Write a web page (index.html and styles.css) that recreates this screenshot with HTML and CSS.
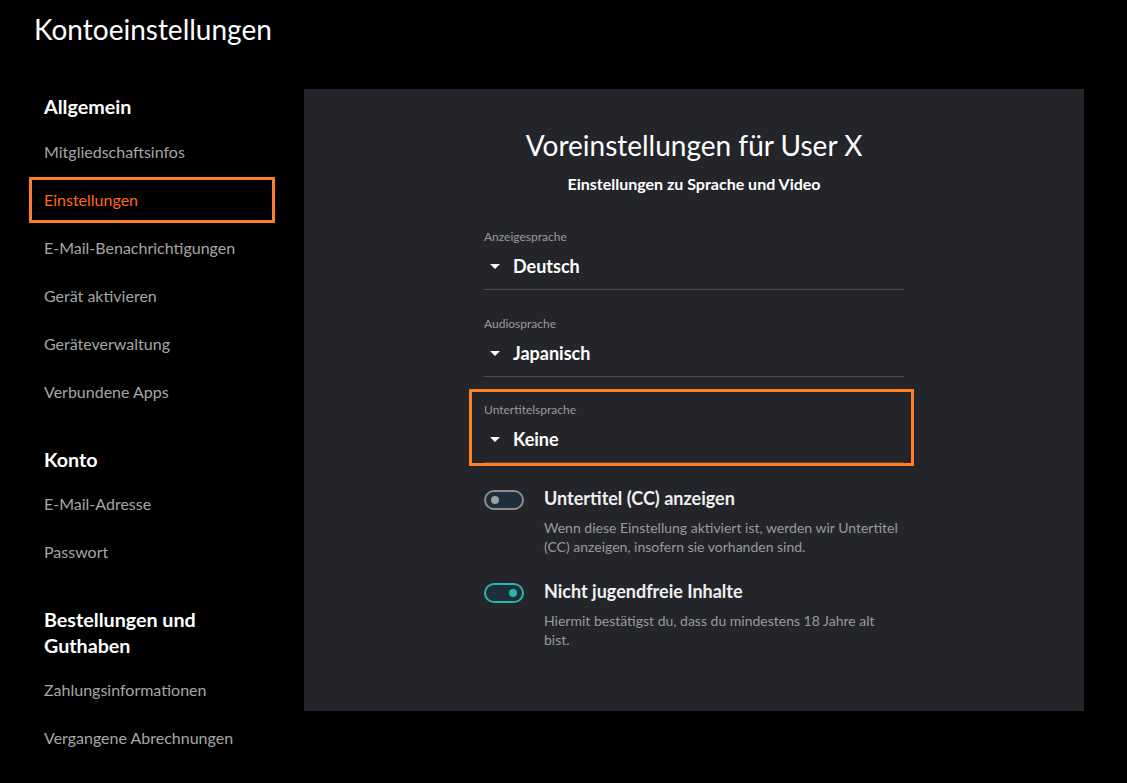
FILE: index.html
```html
<!DOCTYPE html>
<html lang="de">
<head>
    <meta charset="UTF-8">
    <meta name="viewport" content="width=device-width, initial-scale=1.0">
    <title>Kontoeinstellungen</title>
    <link rel="stylesheet" href="styles.css">
</head>
<body>

    <h1 class="page-title">Kontoeinstellungen</h1>

    <div class="layout">
        <!-- Seitenleiste -->
        <nav class="sidebar">
            <h2 class="nav-head">Allgemein</h2>
            <a class="nav-item">Mitgliedschaftsinfos</a>
            <a class="nav-item active">Einstellungen</a>
            <a class="nav-item">E-Mail-Benachrichtigungen</a>
            <a class="nav-item">Gerät aktivieren</a>
            <a class="nav-item">Geräteverwaltung</a>
            <a class="nav-item">Verbundene Apps</a>

            <h2 class="nav-head">Konto</h2>
            <a class="nav-item">E-Mail-Adresse</a>
            <a class="nav-item">Passwort</a>

            <h2 class="nav-head">Bestellungen und Guthaben</h2>
            <a class="nav-item">Zahlungsinformationen</a>
            <a class="nav-item">Vergangene Abrechnungen</a>
        </nav>

        <!-- Hauptbereich -->
        <main class="panel">
            <h1 class="panel-title">Voreinstellungen für User X</h1>
            <p class="panel-sub">Einstellungen zu Sprache und Video</p>

            <div class="form">
                <div class="field">
                    <label>Anzeigesprache</label>
                    <div class="select"><span class="caret"></span>Deutsch</div>
                </div>
                <div class="field">
                    <label>Audiosprache</label>
                    <div class="select"><span class="caret"></span>Japanisch</div>
                </div>
                <div class="highlight">
                    <div class="field">
                        <label>Untertitelsprache</label>
                        <div class="select"><span class="caret"></span>Keine</div>
                    </div>
                </div>

                <div class="option">
                    <span class="toggle"><span class="knob"></span></span>
                    <div>
                        <div class="option-title">Untertitel (CC) anzeigen</div>
                        <p class="option-text">Wenn diese Einstellung aktiviert ist, werden wir Untertitel (CC) anzeigen, insofern sie vorhanden sind.</p>
                    </div>
                </div>
                <div class="option">
                    <span class="toggle on"><span class="knob"></span></span>
                    <div>
                        <div class="option-title">Nicht jugendfreie Inhalte</div>
                        <p class="option-text">Hiermit bestätigst du, dass du mindestens 18 Jahre alt bist.</p>
                    </div>
                </div>
            </div>
        </main>
    </div>

</body>
</html>
```

FILE: styles.css
```css
body {
    background-color: #000;
    color: #fff;
    font-family: Lato, "Open Sans", sans-serif;
    margin: 0;
    padding: 0;
}

.page-title {
    font-size: 28px;
    font-weight: 400;
    margin: 0;
    padding: 11px 0 0 34px;
    line-height: 36px;
}

.layout {
    display: flex;
    align-items: flex-start;
    margin-top: 42px;
}

/* Seitenleiste */
.sidebar {
    width: 275px;
    padding-left: 29px;
    box-sizing: border-box;
    display: flex;
    flex-direction: column;
}

.nav-head {
    font-size: 19.7px;
    font-weight: 700;
    line-height: 26px;
    margin: 31px 0 7px 15px;
    width: 180px;
}

.nav-head:first-child {
    margin-top: 5px;
    margin-bottom: 8px;
}

.nav-item {
    display: block;
    color: #a6a6a6;
    font-size: 16px;
    height: 48px;
    line-height: 48px;
    padding-left: 15px;
    box-sizing: border-box;
}

.nav-item.active {
    color: #ff6a1a;
    border: 3px solid #ff7f27;
    padding-left: 12px;
    line-height: 40px;
    height: 46px;
    margin: 1px 0;
}

/* Hauptbereich */
.panel {
    margin-left: 29px;
    width: 780px;
    height: 622px;
    background-color: #24252a;
    box-sizing: border-box;
    padding-top: 39px;
}

.panel-title {
    text-align: center;
    font-size: 28px;
    font-weight: 400;
    margin: 0;
    line-height: 34px;
}

.panel-sub {
    text-align: center;
    font-size: 16px;
    font-weight: 700;
    margin: 12px 0 0;
    line-height: 20px;
}

.form {
    width: 420px;
    margin: 32px auto 0;
}

.field {
    border-bottom: 1px solid #4b4c52;
    height: 63px;
    margin-bottom: 23px;
}

.field label {
    display: block;
    font-size: 12px;
    color: #9a9a9a;
    line-height: 16px;
    padding-top: 3px;
}

.select {
    font-size: 18px;
    font-weight: 700;
    line-height: 24px;
    margin-top: 9px;
    display: flex;
    align-items: center;
}

.caret {
    width: 0;
    height: 0;
    border-left: 5px solid transparent;
    border-right: 5px solid transparent;
    border-top: 5px solid #fff;
    margin: 0 13px 0 6px;
}

/* orange Markierung um das Untertitel-Feld */
.highlight {
    outline: 3px solid #ff7f27;
    margin: -8px -7px 23px -12px;
    padding: 7px 7px 0 12px;
}

.highlight .field {
    margin-bottom: 0;
}

.option {
    display: flex;
    align-items: flex-start;
    margin-bottom: 23px;
}

.toggle {
    width: 40px;
    height: 20px;
    border: 2px solid #8c8c8c;
    border-radius: 11px;
    background-color: #1c2f3a;
    box-sizing: border-box;
    margin: 4px 20px 0 0;
    flex-shrink: 0;
    display: flex;
    align-items: center;
    padding: 0 5px;
}

.knob {
    width: 8px;
    height: 8px;
    border-radius: 50%;
    background-color: #a0a0a0;
}

.toggle.on {
    border-color: #2ab7ab;
    justify-content: flex-end;
}

.toggle.on .knob {
    background-color: #2ab7ab;
}

.option-title {
    font-size: 18px;
    font-weight: 700;
    line-height: 24px;
    color: #f0f0f0;
}

.option-text {
    font-size: 14px;
    color: #9a9a9a;
    line-height: 19px;
    margin: 8px 0 0;
    width: 356px;
}
```
